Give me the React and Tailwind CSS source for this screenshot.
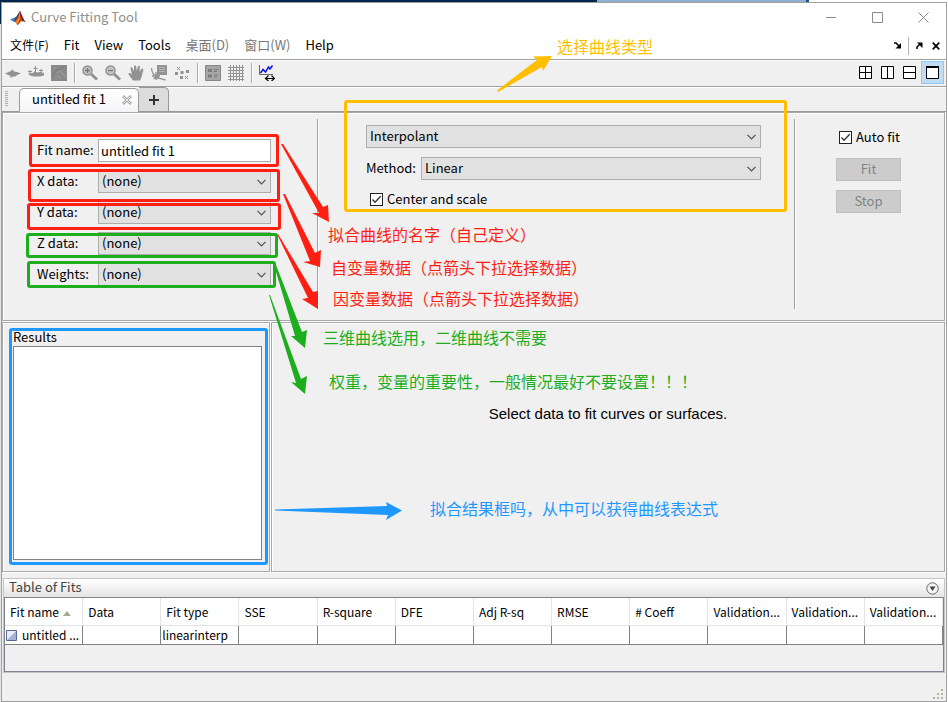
const FIELDS = ["X data:", "Y data:", "Z data:", "Weights:"];

const COLUMNS = [
  "Fit name", "Data", "Fit type", "SSE", "R-square", "DFE",
  "Adj R-sq", "RMSE", "# Coeff", "Validation...", "Validation...", "Validation...",
];

const PANEL = "border border-[#a8a8a8] shadow-[inset_1px_1px_#fff,1px_1px_#fff]";

const NOTES = [
  { text: "选择曲线类型", style: "left-[557px] top-[35px] text-[#ffbf00]" },
  { text: "拟合曲线的名字（自己定义）", style: "left-[328px] top-[223px] text-[#ff1f12]" },
  { text: "自变量数据（点箭头下拉选择数据）", style: "left-[331px] top-[256px] text-[#ff1f12]" },
  { text: "因变量数据（点箭头下拉选择数据）", style: "left-[333px] top-[287px] text-[#ff1f12]" },
  { text: "三维曲线选用，二维曲线不需要", style: "left-[323px] top-[326px] text-[#1cae1c]" },
  { text: "权重，变量的重要性，一般情况最好不要设置！！！", style: "left-[329px] top-[370px] text-[#1cae1c]" },
  { text: "拟合结果框吗，从中可以获得曲线表达式", style: "left-[430px] top-[497px] text-[#1e98ff]" },
];

const BOXES = [
  "left-[29px] top-[134px] w-[250px] h-[33px] border-[#ff1f12]",
  "left-[28px] top-[169px] w-[252px] h-[33px] border-[#ff1f12]",
  "left-[27px] top-[203px] w-[254px] h-[27px] border-[#ff1f12]",
  "left-[26px] top-[233px] w-[252px] h-[25px] border-[#1cae1c]",
  "left-[27px] top-[261px] w-[249px] h-[27px] border-[#1cae1c]",
  "left-[9px] top-[328px] w-[259px] h-[237px] border-[#1e98ff]",
  "left-[344px] top-[100px] w-[443px] h-[112px] border-[#ffbf00]",
];

function Icon({ size = 16, children }) {
  return (
    <svg width={size} height={size} viewBox={`0 0 ${size} ${size}`} fill="none" className="block shrink-0" aria-hidden="true">
      {children}
    </svg>
  );
}

function ToolButton({ label, children }) {
  return (
    <button type="button" aria-label={label} className="flex size-4 items-center justify-center text-[#929292]">
      {children}
    </button>
  );
}

function Separator() {
  return <div className="h-5 w-px bg-[#a8a8a8] shadow-[1px_0_#fff]" />;
}

function Dropdown({ id, value, label, className }) {
  return (
    <div className={`grid h-[23px] ${className}`}>
      <select
        id={id}
        aria-label={label}
        defaultValue={value}
        className="col-start-1 row-start-1 h-[23px] w-full appearance-none border border-[#adadad] bg-[#e1e1e1] pb-px pl-[3px] leading-5 outline-none"
      >
        <option>{value}</option>
      </select>
      <svg width="9" height="6" viewBox="0 0 9 6" fill="none" stroke="#505050" strokeWidth="1.2" aria-hidden="true"
        className="pointer-events-none col-start-1 row-start-1 mr-[5px] self-center justify-self-end">
        <path d="M.5.8 4.5 4.8 8.5.8" />
      </svg>
    </div>
  );
}

function Checkbox({ label, className }) {
  return (
    <label className={`flex items-center gap-1 ${className}`}>
      <span className="grid size-[13px]">
        <input type="checkbox" defaultChecked className="col-start-1 row-start-1 size-[13px] appearance-none border border-[#222] bg-white" />
        <svg width="13" height="13" viewBox="0 0 13 13" fill="none" stroke="#333" strokeWidth="1.3" aria-hidden="true"
          className="pointer-events-none col-start-1 row-start-1">
          <path d="M2.5 6.5 5 9.2 10.7 3.2" />
        </svg>
      </span>
      <span className="pb-0.5">{label}</span>
    </label>
  );
}

function TitleBar() {
  return (
    <header className="flex h-[29px] items-center bg-white pl-2 pr-[17px] text-[#8e8e8e]">
      <Icon size={16}>
        <path d="M0 9.5 5 7.4 7.2 9.2 4.2 12Z" fill="#3f7fb5" />
        <path d="M5 7.4C7 6.8 8 3.5 10 .8 9.6 4.6 8.6 8 7 10L4.2 12Z" fill="#264f7d" />
        <path d="M10 .8C8.7 5 7 9.3 4.2 12c1.6-.3 2.4 1.2 3 3.2C10 14.5 10 10.5 12.2 11.5 11.2 7.5 10.8 2.6 10 .8Z" fill="#c8421c" />
        <path d="M10 .8c1.7 2.8 3.3 9 6 11.8-1.9-1-2.8-1.7-3.8-1.1C11 8 10 4 10 .8Z" fill="#7c1f13" />
        <path d="M9.8 2.4C9.3 6.5 7.8 10 5.2 12c1.1.3 1.6 1.4 2 2.8C9 12 10.6 8 9.8 2.4Z" fill="#f08a22" />
      </Icon>
      <h1 className="ml-[5px] flex-1 pb-px">Curve Fitting Tool</h1>
      <div className="flex gap-[35px]">
        <button type="button" aria-label="Minimize"><Icon size={11}><path d="M0 5.5h10" stroke="#8a8a8a" /></Icon></button>
        <button type="button" aria-label="Maximize"><Icon size={11}><path d="M.5.5h10v10H.5z" stroke="#8a8a8a" /></Icon></button>
        <button type="button" aria-label="Close"><Icon size={11}><path d="m.5.5 10 10M10.500.5l-10 10" stroke="#8a8a8a" /></Icon></button>
      </div>
    </header>
  );
}

function MenuBar() {
  return (
    <nav className="flex h-7 items-center border-b border-[#a0a0a0] bg-white pl-2 pr-1.5">
      <div className="flex flex-1 items-center gap-[15px] pb-px">
        <button type="button" className="text-xs">文件(F)</button>
        <button type="button">Fit</button>
        <button type="button">View</button>
        <button type="button">Tools</button>
        <button type="button" className="text-[#777]">桌面(D)</button>
        <button type="button" className="text-[#777]">窗口(W)</button>
        <button type="button">Help</button>
      </div>
      <div className="flex items-center gap-[7px]">
        <button type="button" aria-label="Dock window"><Icon size={7}><path d="M0 1h2l3 3" stroke="#000" strokeWidth="1.5" /><path d="M7 1v5.500H1.500Z" fill="#000" /></Icon></button>
        <div className="h-[18px] w-px bg-[#b4b4b4]" />
        <button type="button" aria-label="Undock window"><Icon size={7}><path d="M1 7V5l3-3" stroke="#000" strokeWidth="1.500" /><path d="M1 .5h5.500V6Z" fill="#000" /></Icon></button>
        <button type="button" aria-label="Close document" className="ml-0.5"><Icon size={8}><path d="m.7.7 6.600 6.600M7.300.7.7 7.300" stroke="#000" strokeWidth="1.700" /></Icon></button>
      </div>
    </nav>
  );
}

function ToolBar() {
  return (
    <div className="flex h-[27px] items-center border-b border-[#a0a0a0] pl-[3px] pr-0.5 shadow-[inset_0_1px_#fff]">
      <div className="flex flex-1 items-center gap-[7px] pb-px">
        <ToolButton label="Surface plot"><Icon>
          <path d="M0 8.500 5 6.500 7.500 4.500 9 6.500 12 7l4 1.500-4 1.500-1.500 1.500H8L5.500 13v-2L2 9.500Z" fill="currentColor" />
        </Icon></ToolButton>
        <ToolButton label="Residuals plot"><Icon>
          <path d="M0 6.500h4M2 5v4M7.500 1v7M5.500 3.500h4M13 4v5M11 5.500h4" stroke="currentColor" />
          <path d="M0 8.500 5 8l2-2 2 1.500 3-.5 4 1v2.500l-4 1H5.500L2 10.500Z" fill="currentColor" />
        </Icon></ToolButton>
        <ToolButton label="Contour plot"><Icon>
          <path d="M0 0h16v16H0z" fill="#8a8a8a" />
          <path d="M1 12C3 9 3 6 6 5s5-1 7-4" stroke="#7a7a7a" />
          <path d="M6 8c2-2 4-2 5 0s3 2 4 4M7 11l3 2M3 3h2" stroke="#a4a4a4" />
        </Icon></ToolButton>
        <Separator />
        <ToolButton label="Zoom in"><Icon>
          <circle cx="5.500" cy="5.500" r="4.500" stroke="currentColor" strokeWidth="1.500" fill="#c4c4c4" />
          <path d="m9 9 6 5.500" stroke="currentColor" strokeWidth="3" /><path d="M3 5.500h5M5.500 3v5" stroke="#777" strokeWidth="1.300" />
        </Icon></ToolButton>
        <ToolButton label="Zoom out"><Icon>
          <circle cx="5.500" cy="5.500" r="4.500" stroke="currentColor" strokeWidth="1.500" fill="#c4c4c4" />
          <path d="m9 9 6 5.500" stroke="currentColor" strokeWidth="3" /><path d="M3 5.500h5" stroke="#777" strokeWidth="1.300" />
        </Icon></ToolButton>
        <ToolButton label="Pan"><Icon>
          <path d="M5 15.500 1 10C-.5 8.500 1 7.200 2.500 8.300L4 9.500 2.500 3.500C2.300 2 4 1.700 4.500 3L6 6.500V1.500C6 0 8 0 8.200 1.500L8.800 6l1-4.300c.4-1.400 2.200-1 2 .5L11.500 7l1.800-3c.8-1.200 2.400-.4 2 1L13.500 12l-1.500 3.500Z" fill="currentColor" />
        </Icon></ToolButton>
        <ToolButton label="Data cursor"><Icon>
          <path d="M6 0h10v10H9L6 12Z" fill="currentColor" /><path d="M8 2.500h6M8 4.500h6M8 6.500h6" stroke="#b4b4b4" />
          <path d="M.5 3c0 5 4 10 14 12M5 7v8M1 11h8M2.500 9l5 5M7.500 9l-5 5" stroke="currentColor" strokeWidth="1.300" />
        </Icon></ToolButton>
        <ToolButton label="Exclude outliers"><Icon>
          <path d="m3 2 3 3m0-3L3 5M11 11l3 3m0-3-3 3" stroke="currentColor" />
          <path d="M1 7h3v3H1zM6.500 6h3v3h-3zM12 5h3v3h-3zM6 11h3v3H6z" fill="currentColor" />
        </Icon></ToolButton>
        <Separator />
        <ToolButton label="Legend"><Icon>
          <path d="M.5.500h15v15H.5z" fill="#a6a6a6" stroke="#868686" />
          <path d="M3 4h4v3H3zM3 9.500h4v3H3z" fill="#7a7a7a" /><path d="M9 4.500h4M9 6.500h3M9 10h4M9 12h3" stroke="#777" />
        </Icon></ToolButton>
        <ToolButton label="Grid"><Icon>
          <path d="M2.500 0v16M5.500 0v16M8.500 0v16M11.500 0v16M14.500 0v16M0 2.500h16M0 5.500h16M0 8.500h16M0 11.500h16M0 14.500h16" stroke="currentColor" />
        </Icon></ToolButton>
        <Separator />
        <ToolButton label="Axes limits"><Icon>
          <path d="M.5 0v9.500H14" stroke="#666" /><path d="M1.500 8 4 4.500l2.500 2.500L9.500 2l1.500 2L13.500.500" stroke="#0a14e0" strokeWidth="1.500" />
          <path d="M7 13.500h8M9.500 10.500l-3 3 3 2.500M12.500 10.500l3 3-3 2.500" stroke="#000" strokeWidth="1.200" />
        </Icon></ToolButton>
      </div>
      <div className="flex items-center gap-[9px] pb-px text-black">
        <button type="button" aria-label="Tile windows"><Icon size={13}><path d="M.5.500h12v12H.5zM6.500.5v12M.5 6.500h12" fill="#fff" stroke="currentColor" /></Icon></button>
        <button type="button" aria-label="Split left and right"><Icon size={13}><path d="M.5.500h12v12H.5zM6.500.5v12" fill="#fff" stroke="currentColor" /></Icon></button>
        <button type="button" aria-label="Split top and bottom"><Icon size={13}><path d="M.5.500h12v12H.5zM.5 6.500h12" fill="#fff" stroke="currentColor" /></Icon></button>
        <button type="button" aria-label="Single window" className="-ml-1 flex size-[23px] items-center justify-center border border-[#90c8f6] bg-[#c0dcf3]">
          <Icon size={13}><path d="M.5.500h12v12H.5z" fill="#fff" stroke="currentColor" /><path d="M0 1h13" stroke="currentColor" strokeWidth="2" /></Icon>
        </button>
      </div>
    </div>
  );
}

function TabBar() {
  return (
    <div className="flex h-[25px] items-end border-b border-[#999] pl-[3px] shadow-[inset_0_1px_#fff]">
      <div className="mb-1 mr-[11px] h-4 w-[3px] bg-[repeating-linear-gradient(#b0b0b0_0_1px,transparent_1px_2px)]" />
      <div className="-mb-px flex h-6 w-[120px] items-center rounded-t-[5px] border border-b-0 border-[#999] bg-[linear-gradient(#fff,#f4f4f6)] pb-0.5 pl-3 pr-1.5">
        <button type="button" className="flex-1 pb-px text-left">untitled fit 1</button>
        <button type="button" aria-label="Close tab"><Icon size={10}><path d="m1 1 8 8M9 1 1 9" stroke="#a6a6a6" strokeWidth="2.500" /><path d="m1.500 1.500 7 7M8.500 1.500l-7 7" stroke="#fff" strokeWidth=".8" /></Icon></button>
      </div>
      <button type="button" aria-label="New fit" className="flex h-6 w-[30px] items-center justify-center rounded-tr-[5px] border border-b-0 border-l-0 border-[#999] bg-[#dcdcdc]">
        <Icon size={10}><path d="M0 5h10M5 0v10" stroke="#333" strokeWidth="2" /></Icon>
      </button>
    </div>
  );
}

function FitPanel() {
  return (
    <section className={`flex h-[209px] ${PANEL}`}>
      <div className="grid w-[314px] shrink-0 content-start gap-y-2 pl-[34px] pr-[46px] pt-[26px]">
        <div className="flex items-center">
          <label htmlFor="fit-name" className="w-[61px] pb-px">Fit name:</label>
          <input id="fit-name" defaultValue="untitled fit 1" className="h-[23px] min-w-0 flex-1 border border-[#adadad] bg-white px-0.5 pb-px outline-none" />
        </div>
        {FIELDS.map((name) => (
          <div key={name} className="flex items-center">
            <label htmlFor={name} className="w-[61px] pb-px">{name}</label>
            <Dropdown id={name} value="(none)" className="flex-1" />
          </div>
        ))}
      </div>
      <div className="mb-[11px] mt-1.5 w-px bg-[#a0a0a0] shadow-[1px_0_#fff]" />
      <div className="flex flex-1 flex-col gap-[9px] pl-12 pr-[33px] pt-3">
        <Dropdown value="Interpolant" label="Fit type" className="w-full" />
        <div className="flex items-center">
          <label htmlFor="method" className="w-[55px] pb-px">Method:</label>
          <Dropdown id="method" value="Linear" className="flex-1" />
        </div>
        <Checkbox label="Center and scale" className="h-[21px] pl-1" />
      </div>
      <div className="mb-[11px] mt-1.5 w-px bg-[#a0a0a0] shadow-[1px_0_#fff]" />
      <div className="flex w-[149px] shrink-0 flex-col gap-[9px] pl-[41px] pt-[13px]">
        <Checkbox label="Auto fit" className="h-[23px] pl-[3px]" />
        <button type="button" disabled className="h-[23px] w-[65px] border border-[#bfbfbf] bg-[#ccc] pb-px text-[#838383]">Fit</button>
        <button type="button" disabled className="h-[23px] w-[65px] border border-[#bfbfbf] bg-[#ccc] pb-px text-[#838383]">Stop</button>
      </div>
    </section>
  );
}

function ResultsRow() {
  return (
    <div className="flex min-h-[250px] flex-1 gap-px">
      <section className={`flex w-[268px] shrink-0 flex-col pb-[11px] pl-2.5 pr-[7px] pt-1.5 ${PANEL}`}>
        <label htmlFor="results" className="h-[17px] leading-4">Results</label>
        <textarea id="results" readOnly className="flex-1 resize-none border border-[#828282] bg-white outline-none" />
      </section>
      <section className={`flex flex-1 items-center justify-center pb-[66px] ${PANEL}`}>
        <p className="font-['Liberation_Sans',sans-serif] text-[15px]">Select data to fit curves or surfaces.</p>
      </section>
    </div>
  );
}

function FitsTable() {
  return (
    <section className="ml-px mt-[5px] border border-[#c4c4c4]">
      <div className="flex h-[18px] items-center justify-between bg-[linear-gradient(#fff,#e4e4e4)] px-[5px] text-[#444]">
        <h2 className="pb-0.5">Table of Fits</h2>
        <button type="button" aria-label="Table options"><Icon size={13}><circle cx="6.500" cy="6.500" r="5.700" stroke="#666" fill="#f4f4f4" /><path d="M3.500 4.500h6l-3 4.500Z" fill="#444" /></Icon></button>
      </div>
      <div className="h-[75px] border border-[#83838f]">
        <table className="w-full table-fixed border-separate border-spacing-0 bg-white text-xs">
          <thead>
            <tr>
              {COLUMNS.map((name, i) => (
                <th key={i} className="h-7 whitespace-nowrap border-b border-r border-[#e4e4e4] pl-[5px] text-left font-normal">
                  {name}
                  {i === 0 && <span className="ml-1 inline-block border-x-4 border-b-[5px] border-x-transparent border-b-[#a9a995] align-middle" />}
                </th>
              ))}
            </tr>
          </thead>
          <tbody>
            <tr>
              {COLUMNS.map((name, i) => (
                <td key={i} className="h-[19px] whitespace-nowrap border-b border-r border-[#828282] pl-px leading-[18px]">
                  {i === 0 && (
                    <span className="flex items-center gap-[5px]">
                      <Icon size={11}><path d="M.5.500h10v10H.5z" fill="#e9edf6" stroke="#5b6a94" /><path d="M10 1v9H1Z" fill="#a7b3d6" /></Icon>
                      untitled ...
                    </span>
                  )}
                  {i === 2 && "linearinterp"}
                </td>
              ))}
            </tr>
          </tbody>
        </table>
      </div>
    </section>
  );
}

function Annotations() {
  return (
    <div className="pointer-events-none absolute inset-0 overflow-hidden">
      {BOXES.map((box) => (
        <div key={box} className={`absolute rounded-[3px] border-3 ${box}`} />
      ))}
      <svg width="948" height="702" viewBox="0 0 948 702" className="absolute left-0 top-0" aria-hidden="true">
        <g fill="#ff1f12">
          <path d="M281 144 319 213 312 213 329 222 328 205 323 207 283 144Z" />
          <path d="M283 194 310 261 303 262 320 267 321 250 315 253 285 194Z" />
          <path d="M277 234 308 298 302 299 318 309 318 291 313 292 278 234Z" />
        </g>
        <g fill="#1cae1c">
          <path d="M274 265 295 336 291 336 305 348 307 330 302 332 276 265Z" />
          <path d="M269 295 296 383 291 382 305 394 307 376 301 379 270 295Z" />
        </g>
        <path d="M275 509.500 387 506 386 502 402 510.500 386 520 388 515 275 510.500Z" fill="#1e98ff" />
        <path d="M497 90.500 537 60 533 56.500 552 56 543 71 542 67 498 92Z" fill="#ffbf00" />
      </svg>
      {NOTES.map((note) => (
        <p key={note.text} className={`absolute whitespace-nowrap text-base leading-[23px] ${note.style}`}>{note.text}</p>
      ))}
    </div>
  );
}

export default function App() {
  return (
    <div className="relative flex min-h-screen flex-col bg-white pb-px font-['Noto_Sans_CJK_SC',sans-serif] text-[13px] leading-[18px] text-black">
      <div className="flex h-0.5">
        <div className="w-[63%] bg-[#00264d]" />
        <div className="w-[22%] bg-[#8fadcf]" />
        <div className="w-[3px] bg-[#1b4f86]" />
      </div>
      <div className="flex flex-1">
        <div className="w-px bg-[linear-gradient(#00264d_0_22px,#e4e4e4_22px)]" />
        <main className="mr-px flex flex-1 flex-col border border-[#a0a0a0] bg-[#f0f0f0]">
          <TitleBar />
          <MenuBar />
          <ToolBar />
          <TabBar />
          <div className="flex flex-1 flex-col gap-px pr-px">
            <FitPanel />
            <ResultsRow />
            <FitsTable />
          </div>
          <footer className="flex h-7 items-end justify-end pb-px pr-0.5">
            <Icon size={11}><path d="M8 0h2v2H8zM4 4h2v2H4zM8 4h2v2H8zM0 8h2v2H0zM4 8h2v2H4zM8 8h2v2H8z" fill="#b5b5a5" /></Icon>
          </footer>
        </main>
      </div>
      <Annotations />
    </div>
  );
}
